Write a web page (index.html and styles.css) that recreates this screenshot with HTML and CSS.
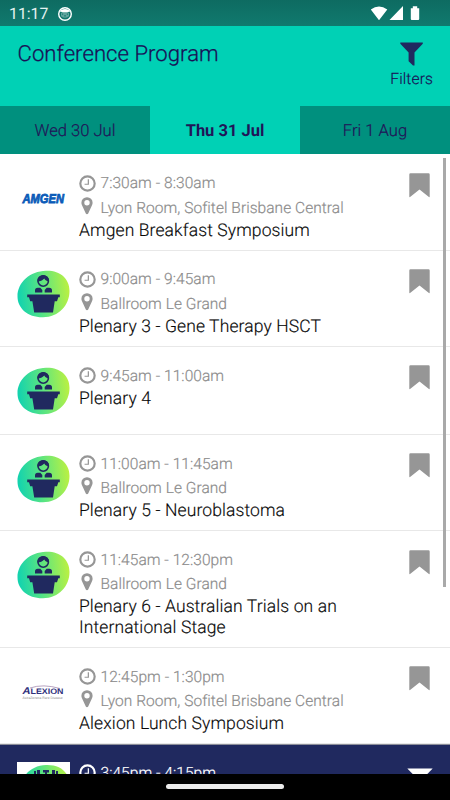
FILE: index.html
```
<!DOCTYPE html>
<html lang="en">
<head>
<meta charset="utf-8">
<title>Conference Program</title>
<link rel="stylesheet" href="styles.css">
</head>
<body>
<svg class="defs" width="0" height="0">
  <defs>
    <linearGradient id="lime" x1="0" x2="1" y1="0.3" y2="0.2"><stop offset="0" stop-color="#14d3ae"/><stop offset="0.5" stop-color="#62e67c"/><stop offset="1" stop-color="#bff13f"/></linearGradient>
    <symbol id="clock" viewBox="0 0 18 18"><circle cx="9" cy="9" r="7.600" fill="none" stroke="currentColor" stroke-width="2.300"/><path d="M9.900 4.600V9.800H5.900" fill="none" stroke="currentColor" stroke-width="1.300"/></symbol>
    <symbol id="pin" viewBox="0 0 12 18"><path fill="currentColor" fill-rule="evenodd" d="M6 .2A5.500 5.500 0 0 0 .4 5.800c0 1 .2 1.800.6 2.500l3.800 8.300c.5 1 1.900 1 2.400 0L11 8.300c.4-.7.6-1.500.6-2.500A5.500 5.500 0 0 0 6 .2zM6 3.100a2.700 2.700 0 1 1 0 5.400 2.700 2.700 0 0 1 0-5.400z"/></symbol>
    <symbol id="bookmark" viewBox="0 0 21 25"><path fill="currentColor" d="M1.500.2h18q1.200 0 1.200 1.200v22q0 1.300-1.100.4L10.500 16.500 1.400 23.800Q.3 24.700.3 23.400v-22Q.3.200 1.500.2z"/></symbol>
    <symbol id="podium" viewBox="0 0 53 48">
      <path fill="url(#lime)" d="M29 .8C43 .3 52.500 8.500 52.500 21c0 14-10.500 26-26.500 26.300C10.500 47.500.5 38 .5 26.500.5 12.500 13 1.200 29 .8z"/>
      <g fill="#20295f">
        <circle cx="26.200" cy="11" r="5.200" fill="none" stroke="#20295f" stroke-width="1.600"/>
        <path d="M20.400 11.500C19.800 3 32.800 3 32 11.500 29.500 11.200 28.300 10.500 27.300 8.600 25.500 10.700 23.300 11.500 20.400 11.500z"/>
        <path d="M18 22.400v-1.800q0-2.800 2.800-2.800h2.500l2 2.300v2.300zM35 22.400v-1.800q0-2.800-2.800-2.800h-2.500l-2 2.300v2.300z"/>
        <path d="M10.200 24.500h32.600v2.700H41.300L40 31.300h-2.300L36 42.400H17.200L15.400 31.300h-2.200L12 27.200h-1.800z"/>
      </g>
    </symbol>
  </defs>
</svg>
<div class="phone">
  <div class="status">
    <span class="status-time">11:17</span>
    <svg class="cat" viewBox="0 0 14 14"><circle cx="7" cy="7" r="6.300" fill="#10756a" stroke="#fff" stroke-width="1.400"/><path fill="#fff" d="M1 6C2 .5 12 .5 13 6L11.400 4.400 9.300 5.400H4.700L2.600 4.400z"/><path fill="#5fa39c" d="M3 5.800h8v3.500q-4 3-8 0z"/><path d="M4.600 6.500v1.300M9.400 6.500v1.300M6 8.600l1 .6 1-.6" stroke="#10756a" stroke-width=".9" fill="none"/></svg>
    <svg class="signals" viewBox="0 0 50 15" fill="#fff"><path d="M.8 3.600Q9 -2.600 17.300 3.600L9 14.200zM19.500 14 33 0v14zM40.800 2.200h2V.300h4.400v1.900h2V13q0 1-1 1h-6.400q-1 0-1-1z"/></svg>
  </div>
  <header class="header">
    <h1>Conference Program</h1>
    <div class="filters">
      <svg class="funnel" viewBox="0 0 23 24"><path fill="#20295f" d="M.3.500H22.800V1.800L14.500 10.400V23.400H13L8.600 19.300V10.400L.3 1.800z"/></svg>
      <span>Filters</span>
    </div>
  </header>
  <nav class="tabs"><div class="tab">Wed 30 Jul</div><div class="tab active">Thu 31 Jul</div><div class="tab">Fri 1 Aug</div></nav>
  <main class="list">
    <div class="scrollbar"></div>
    <article class="row">
      <div class="thumb"><svg class="logo" viewBox="0 0 53 48"><text class="amgen" x="5.500" y="28.500" textLength="41.500" lengthAdjust="spacingAndGlyphs">AMGEN</text></svg></div>
      <div class="info"><p class="meta"><svg class="clock"><use href="#clock"/></svg>7:30am - 8:30am</p><p class="meta"><svg class="pin"><use href="#pin"/></svg>Lyon Room, Sofitel Brisbane Central</p><h2>Amgen Breakfast Symposium</h2></div>
      <svg class="bookmark"><use href="#bookmark"/></svg>
    </article>
    <article class="row">
      <div class="thumb"><svg class="logo"><use href="#podium"/></svg></div>
      <div class="info"><p class="meta"><svg class="clock"><use href="#clock"/></svg>9:00am - 9:45am</p><p class="meta"><svg class="pin"><use href="#pin"/></svg>Ballroom Le Grand</p><h2>Plenary 3 - Gene Therapy HSCT</h2></div>
      <svg class="bookmark"><use href="#bookmark"/></svg>
    </article>
    <article class="row">
      <div class="thumb"><svg class="logo"><use href="#podium"/></svg></div>
      <div class="info"><p class="meta"><svg class="clock"><use href="#clock"/></svg>9:45am - 11:00am</p><h2>Plenary 4</h2></div>
      <svg class="bookmark"><use href="#bookmark"/></svg>
    </article>
    <article class="row">
      <div class="thumb"><svg class="logo"><use href="#podium"/></svg></div>
      <div class="info"><p class="meta"><svg class="clock"><use href="#clock"/></svg>11:00am - 11:45am</p><p class="meta"><svg class="pin"><use href="#pin"/></svg>Ballroom Le Grand</p><h2>Plenary 5 - Neuroblastoma</h2></div>
      <svg class="bookmark"><use href="#bookmark"/></svg>
    </article>
    <article class="row">
      <div class="thumb"><svg class="logo"><use href="#podium"/></svg></div>
      <div class="info"><p class="meta"><svg class="clock"><use href="#clock"/></svg>11:45am - 12:30pm</p><p class="meta"><svg class="pin"><use href="#pin"/></svg>Ballroom Le Grand</p><h2>Plenary 6 - Australian Trials on an International Stage</h2></div>
      <svg class="bookmark"><use href="#bookmark"/></svg>
    </article>
    <article class="row">
      <div class="thumb"><svg class="logo" viewBox="0 0 53 48"><path d="M13 20Q26 15.500 43 20.500" fill="none" stroke="#a58bb0" stroke-width=".8"/><text class="alexion" x="5.500" y="26" textLength="41" lengthAdjust="spacingAndGlyphs"><tspan class="cap">A</tspan>LEXION</text><text class="tagline" x="5.500" y="31" textLength="40" lengthAdjust="spacingAndGlyphs">AstraZeneca Rare Disease</text></svg></div>
      <div class="info"><p class="meta"><svg class="clock"><use href="#clock"/></svg>12:45pm - 1:30pm</p><p class="meta"><svg class="pin"><use href="#pin"/></svg>Lyon Room, Sofitel Brisbane Central</p><h2>Alexion Lunch Symposium</h2></div>
      <svg class="bookmark"><use href="#bookmark"/></svg>
    </article>
    <article class="row break">
      <div class="thumb"><svg class="logo" viewBox="0 0 53 48"><path fill="url(#lime)" d="M29 3C43 2.500 52.500 10 52.500 23c0 14-10.500 24-26.500 24.300C10.500 47.500 4 38 4 26.500 4 14 14 3.500 29 3z"/><path fill="#20295f" d="M17 9h2v3h-2zM20 8h3v4h-3zM26 8h6v2.500h-2V12h-2v-1.500h-2zM35 8h3v4h-3zM39 9h2v3h-2z"/></svg></div>
      <div class="info"><p class="meta"><svg class="clock"><use href="#clock"/></svg>3:45pm - 4:15pm</p></div>
      <svg class="chevron" viewBox="0 0 26 14"><path fill="#fff" d="M.3.500h25.400L13 13.500z"/></svg>
    </article>
  </main>
  <footer class="navbar"><div class="handle"></div></footer>
</div>
</body>
</html>
```

FILE: styles.css
```
* { box-sizing: border-box; }
body { margin: 0; font-family: Roboto, "Liberation Sans", sans-serif; text-rendering: geometricPrecision; }
h1, h2, p { margin: 0; font-weight: 300; }
svg { display: block; flex: none; }
.defs { position: absolute; }
.phone { width: 450px; height: 800px; display: flex; flex-direction: column; overflow: hidden; background: #fff; }
.status { height: 26px; flex: none; display: flex; align-items: center; padding: 1px 30px 0 9px; background: linear-gradient(#0e6b61, #107a6e); color: #e4f2f0; }
.status-time { width: 49px; font-size: 15.800px; }
.cat { width: 14px; height: 14px; }
.signals { width: 50px; height: 15px; margin-left: auto; }
.header { height: 80px; flex: none; display: flex; justify-content: space-between; padding: 0 17px 0 17.500px; background: #00d1b5; color: #190f56; }
.header h1 { font-size: 22.100px; line-height: 26px; margin-top: 15px; letter-spacing: 0.050px; -webkit-text-stroke: 0.250px; }
.filters { display: flex; flex-direction: column; align-items: center; padding-top: 16px; font-size: 15.600px; font-weight: 300; line-height: 18px; letter-spacing: 0.100px; -webkit-text-stroke: 0.200px; }
.funnel { width: 23px; height: 24px; margin-bottom: 4px; }
.tabs { height: 48px; flex: none; display: flex; color: #201558; font-size: 16.600px; font-weight: 300; }
.tab { flex: 1; display: flex; align-items: center; justify-content: center; padding-top: 3px; background: #00907e; -webkit-text-stroke: 0.200px; }
.tab.active { background: #00d1b5; font-weight: 700; -webkit-text-stroke: 0; font-size: 16.500px; }
.list { flex: 1; min-height: 0; overflow: hidden; position: relative; padding-top: 0.500px; }
.scrollbar { position: absolute; right: 4px; top: 4px; width: 3px; height: 429px; background: #a9a9a9; }
.row { display: flex; align-items: flex-start; min-height: 88px; padding: 16.300px 20px 8.600px 17.400px; border-bottom: 1px solid #e8e8e8; }
.thumb { width: 53px; height: 48px; margin: 3.300px 8.600px 0 0; flex: none; }
.logo { width: 53px; height: 48px; }
.info { flex: 1; padding-right: 30px; }
.meta { display: flex; align-items: center; height: 24.600px; font-size: 15.500px; letter-spacing: 0.050px; color: #8c8c8c; white-space: nowrap; -webkit-text-stroke: 0.200px; }
.clock { width: 17px; height: 17px; margin-right: 4.500px; color: #969696; }
.pin { width: 12px; height: 18px; margin: -4px 7.500px 0 2px; color: #969696; }
.info h2 { font-size: 17.500px; line-height: 20.500px; padding-top: 0.700px; letter-spacing: 0.110px; color: #080808; -webkit-text-stroke: 0.150px; }
.bookmark { width: 21px; height: 25px; margin-top: 2px; color: #969696; }
.amgen { font: italic 700 13px "Liberation Sans", sans-serif; fill: #0b5bb8; stroke: #0b5bb8; stroke-width: 0.800px; }
.alexion { font: 700 8px "Liberation Sans", sans-serif; fill: #30317c; }
.cap { font-size: 10px; font-style: italic; }
.tagline { font: 3.500px "Liberation Sans", sans-serif; fill: #8e8e8e; }
.break { background: #20295f; border-top: 1px solid #8b8d98; border-bottom: 0; padding-top: 15.300px; }
.break .thumb { margin-top: 1px; background: #fff; }
.break .meta, .break .clock { color: #fff; }
.chevron { width: 26px; height: 14px; margin: 7px -3px 0 0; }
.navbar { height: 26px; flex: none; background: #000; display: flex; justify-content: center; padding-top: 10px; }
.handle { width: 118px; height: 5px; border-radius: 3px; background: #ececec; }
```
